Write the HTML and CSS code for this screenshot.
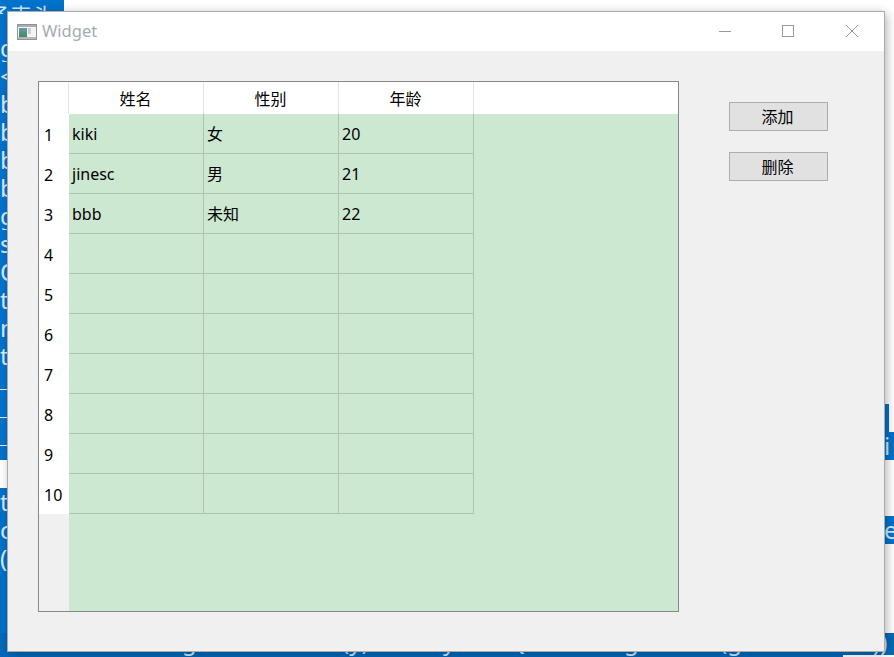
FILE: index.html
```html
<!DOCTYPE html>
<html lang="zh">
<head>
<meta charset="utf-8">
<title>Widget</title>
<link rel="stylesheet" href="styles.css">
</head>
<body>
<div class="desktop">
  <div class="blue-top"><span class="blue-top-text">予表头</span></div>
  <div class="code-column">
    <div class="code-line">g</div><div class="code-line">&lt;</div><div class="code-line">b</div><div class="code-line">b</div><div class="code-line">b</div><div class="code-line">b</div><div class="code-line">g</div><div class="code-line">s</div><div class="code-line">Q</div><div class="code-line">t</div><div class="code-line">n</div><div class="code-line">t</div>
    <div class="code-rule code-rule-first"></div><div class="code-rule"></div><div class="code-rule"></div>
  </div>
  <div class="blue-left-low">
    <div class="code-line">t</div><div class="code-line">c</div><div class="code-line">(</div>
  </div>
  <div class="blue-right-a"></div>
  <div class="blue-right-b">i</div>
  <div class="blue-right-c">e</div>
  <div class="blue-bottom">
    <span class="bottom-g">g</span><span class="bottom-p1">(y)</span><span class="bottom-y">y</span><span class="bottom-q">Q</span><span class="bottom-g2">g</span><span class="bottom-p2">(g</span><span class="bottom-end">))</span>
  </div>

  <div class="window">
    <div class="titlebar">
      <svg class="app-icon" width="20" height="16" viewBox="0 0 20 16">
        <defs>
          <linearGradient id="iconFill" x1="0" y1="0" x2="0" y2="1">
            <stop offset="0" stop-color="#6f9aa8"/>
            <stop offset="1" stop-color="#3f8a62"/>
          </linearGradient>
        </defs>
        <rect x="0.5" y="0.5" width="19" height="15" fill="#f4f6f6" stroke="#8f9496"/>
        <rect x="1" y="1" width="18" height="2" fill="#a9adb0"/>
        <rect x="2" y="4" width="8" height="9" fill="url(#iconFill)"/>
        <rect x="11" y="4" width="3" height="6" fill="#c4d4c8"/>
        <rect x="1" y="13" width="18" height="2" fill="#b4b8ba"/>
      </svg>
      <span class="title-text">Widget</span>
      <div class="controls">
        <span class="control">
          <svg width="14" height="14" viewBox="0 0 14 14"><path d="M2 7.5H14" stroke="#9a9a9a" fill="none"/></svg>
        </span>
        <span class="control">
          <svg width="14" height="14" viewBox="0 0 14 14"><rect x="1.5" y="1.5" width="11" height="11" stroke="#9a9a9a" fill="none"/></svg>
        </span>
        <span class="control">
          <svg width="14" height="14" viewBox="0 0 14 14"><path d="M1 1L13 13M13 1L1 13" stroke="#9a9a9a" fill="none"/></svg>
        </span>
      </div>
    </div>
    <div class="content">
      <div class="table">
        <div class="corner"></div>
        <div class="col-head">姓名</div><div class="col-head">性别</div><div class="col-head">年龄</div><div class="head-fill"></div>

        <div class="row-head">1</div><div class="cell">kiki</div><div class="cell cell-cjk">女</div><div class="cell">20</div>
        <div class="row-head">2</div><div class="cell">jinesc</div><div class="cell cell-cjk">男</div><div class="cell">21</div>
        <div class="row-head">3</div><div class="cell">bbb</div><div class="cell cell-cjk">未知</div><div class="cell">22</div>
        <div class="row-head">4</div><div class="cell"></div><div class="cell"></div><div class="cell"></div>
        <div class="row-head">5</div><div class="cell"></div><div class="cell"></div><div class="cell"></div>
        <div class="row-head">6</div><div class="cell"></div><div class="cell"></div><div class="cell"></div>
        <div class="row-head">7</div><div class="cell"></div><div class="cell"></div><div class="cell"></div>
        <div class="row-head">8</div><div class="cell"></div><div class="cell"></div><div class="cell"></div>
        <div class="row-head">9</div><div class="cell"></div><div class="cell"></div><div class="cell"></div>
        <div class="row-head">10</div><div class="cell"></div><div class="cell"></div><div class="cell"></div>
        <div class="row-foot"></div>
      </div>
      <div class="actions">
        <button class="btn" type="button">添加</button>
        <button class="btn" type="button">删除</button>
      </div>
    </div>
  </div>
</div>
</body>
</html>
```
FILE: styles.css
```css
* { box-sizing: border-box; }
html, body { margin: 0; padding: 0; }
body {
  width: 894px;
  height: 657px;
  overflow: hidden;
  font-family: "Noto Sans", "Noto Sans CJK SC", sans-serif;
}
.desktop {
  position: relative;
  width: 894px;
  height: 657px;
  overflow: hidden;
  background: #ffffff;
}
.blue-top {
  position: absolute;
  left: 0;
  top: 0;
  width: 64px;
  height: 14px;
  background: #0073cc;
  overflow: hidden;
}
.blue-top-text {
  display: block;
  margin-left: -12px;
  padding-top: 2px;
  white-space: nowrap;
  color: #cfe6f8;
  font: 22px/24px "Noto Sans CJK SC", sans-serif;
}
.code-column {
  position: absolute;
  left: 0;
  top: 14px;
  width: 14px;
  height: 446px;
  background: #0073cc;
  padding-top: 20px;
}
.code-line {
  height: 28px;
  font-size: 24px;
  line-height: 28px;
  color: #d8ebfa;
  overflow: hidden;
}
.code-rule {
  height: 28px;
  border-bottom: 1px solid #d8ebfa;
}
.code-rule-first { height: 20px; }
.blue-left-low {
  position: absolute;
  left: 0;
  top: 488px;
  width: 14px;
  height: 169px;
  background: #0070c8;
}
.blue-right-a {
  position: absolute;
  left: 880px;
  top: 404px;
  width: 9px;
  height: 28px;
  background: #0073cc;
}
.blue-right-b, .blue-right-c {
  position: absolute;
  left: 880px;
  width: 14px;
  height: 28px;
  background: #0073cc;
  color: #d8ebfa;
  font-size: 24px;
  line-height: 28px;
  padding-left: 4px;
  overflow: hidden;
}
.blue-right-b { top: 432px; }
.blue-right-c { top: 516px; }
.blue-bottom {
  position: absolute;
  left: 0;
  top: 633px;
  width: 894px;
  height: 24px;
  background: #0069bc;
  color: #d8ebfa;
  font-size: 24px;
  line-height: 24px;
  overflow: hidden;
}
.blue-bottom::after {
  content: "";
  position: absolute;
  left: 843px;
  top: 22px;
  width: 51px;
  height: 2px;
  background: #ffffff;
}
.blue-bottom span { position: absolute; top: -4px; }
.bottom-g { left: 182px; }
.bottom-p1 { left: 342px; }
.bottom-y { left: 443px; }
.bottom-q { left: 508px; }
.bottom-g2 { left: 624px; }
.bottom-p2 { left: 720px; }
.blue-bottom .bottom-end { left: 873px; top: -3px; }

.window {
  position: absolute;
  left: 8px;
  top: 12px;
  width: 876px;
  height: 639px;
  background: #f0f0f0;
  display: flex;
  flex-direction: column;
  box-shadow: 0 0 0 1px #ababab, 2px 2px 10px rgba(0, 0, 0, .35);
}
.titlebar {
  height: 39px;
  flex: none;
  background: #ffffff;
  display: flex;
  align-items: center;
  padding-left: 9px;
}
.app-icon { flex: none; }
.title-text {
  margin-left: 5px;
  margin-top: -1px;
  font-size: 16.5px;
  color: #a5abb2;
  line-height: 20px;
}
.controls {
  margin-left: auto;
  display: flex;
  height: 100%;
}
.control {
  width: 64px;
  display: flex;
  align-items: center;
  justify-content: center;
  margin-top: -1px;
}
.content {
  flex: 1;
  display: flex;
  align-items: flex-start;
  padding: 30px 0 0 30px;
}
.table {
  width: 641px;
  height: 531px;
  border: 1px solid #85898c;
  background: #cde8d0;
  display: grid;
  grid-template-columns: 30px 135px 135px 135px 1fr;
  grid-template-rows: 32px repeat(10, 40px) 1fr;
  color: #000;
  font-size: 16px;
}
.corner {
  background: #fff;
  border-right: 1px solid #e3e3e3;
}
.col-head {
  background: #fff;
  border-right: 1px solid #e3e3e3;
  display: flex;
  align-items: center;
  justify-content: center;
  padding-right: 1px;
  font-family: "Noto Sans CJK SC", sans-serif;
  font-size: 16px;
}
.head-fill { background: #fff; }
.row-head {
  grid-column: 1;
  background: #fff;
  display: flex;
  align-items: center;
  padding-left: 5px;
  padding-top: 1px;
}
.cell {
  border-right: 1px solid #aec4ae;
  border-bottom: 1px solid #aec4ae;
  display: flex;
  align-items: center;
  padding-left: 3px;
}
.cell-cjk { padding-bottom: 2px; }
.row-foot {
  grid-column: 1;
  background: #f0f0f0;
}
.actions {
  margin-left: 50px;
  padding-top: 21px;
  display: flex;
  flex-direction: column;
  gap: 21px;
}
.btn {
  width: 99px;
  height: 29px;
  padding: 0 2px 2px 0;
  background: #e1e1e1;
  border: 1px solid #adadad;
  border-radius: 0;
  color: #000;
  font-family: "Noto Sans CJK SC", sans-serif;
  font-size: 16px;
}
```
